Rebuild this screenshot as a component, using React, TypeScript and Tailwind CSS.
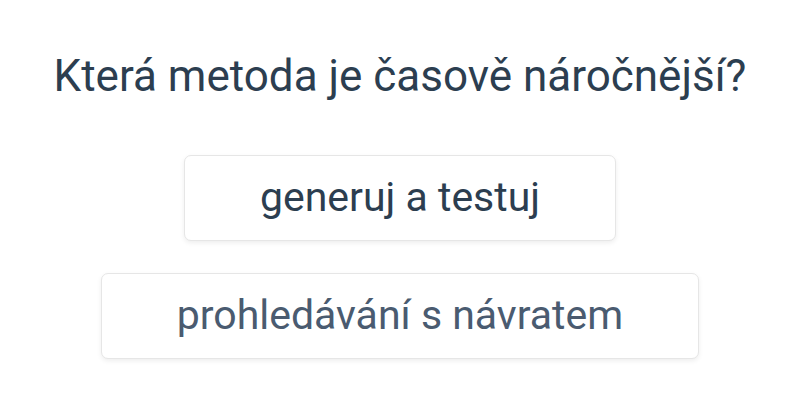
import React from 'react';

const options = [
  { label: 'generuj a testuj', tone: 'text-[#2c3e50]' },
  { label: 'prohledávání s návratem', tone: 'text-[#4a5b70]' },
];

export default function App() {
  return (
    <div className="w-[800px] h-[400px] bg-white flex flex-col items-center pt-[50px] font-['Roboto',sans-serif]">
      <h1 className="text-[44px] leading-[53px] text-[#2c3e50] font-normal">
        Která metoda je časově náročnější?
      </h1>
      <div className="flex flex-col items-center gap-[32px] mt-[52px]">
        {options.map(option => (
          <button
            key={option.label}
            className={`h-[86px] px-[75px] rounded-[7px] bg-white border border-[#e6e6e6] shadow-[0_2px_5px_rgba(0,0,0,0.07)] text-[41px] ${option.tone}`}
          >
            {option.label}
          </button>
        ))}
      </div>
    </div>
  );
}
